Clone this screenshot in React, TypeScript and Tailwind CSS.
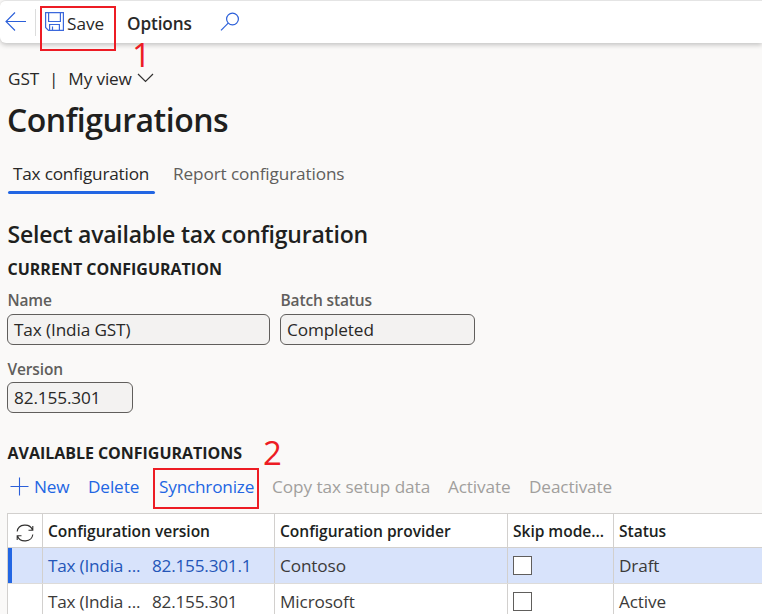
import type { ReactNode } from "react";

function TopBar() {
  return (
    <header className="flex h-[43px] items-center rounded-l-md border-t border-[#e4e4e4] bg-white shadow-[0_2px_5px_rgba(0,0,0,0.22)]">
      <svg className="ml-[5px] h-[22px] w-[22px] shrink-0" viewBox="0 0 22 22" fill="none" stroke="#2b5fd9" strokeWidth="1.1">
        <path d="M21 10.5H1M10 1.5L1 10.5L10 19.5" />
      </svg>
      <div className="ml-2 h-[27px] w-px bg-[#dcdcdc]" />
      <svg className="ml-[9px] h-[20px] w-[20px] shrink-0" viewBox="0 0 20 20" fill="none" stroke="#3b68dc" strokeWidth="1.2">
        <path d="M0.6 0.6H18.4V18.4H3.5L0.6 15.5Z M3.6 0.6V9.5H15.4V0.6 M4.6 18.4V12.5H14.4V18.4 M7.5 14.5V18.4" />
      </svg>
      <span className="mt-[3px] ml-[2px] w-[60px] tracking-[0px]">Save</span>
      <span className="mt-[3px] w-[64px] font-semibold">Options</span>
      <svg className="ml-[29px] h-[20px] w-[20px]" viewBox="0 0 20 20" fill="none" stroke="#2b5fd9" strokeWidth="1.2">
        <circle cx="12.5" cy="7" r="5.9" />
        <path d="M8.2 11.2L1 18.4" />
      </svg>
    </header>
  );
}

function Field({ label, value, width, gap }: { label: string; value: string; width: string; gap: string }) {
  return (
    <div className={width}>
      <div className="pl-[0.5px] text-[15.5px] leading-5 font-semibold tracking-[-0.15px] text-[#605e5c]">{label}</div>
      <div className={`${gap} flex h-[31px] items-center rounded-[6px] border border-[#605e5c] bg-[#f3f2f1] pl-[6px]`}>{value}</div>
    </div>
  );
}

function Cell({ children, last }: { children?: ReactNode; last?: boolean }) {
  return <div className={`flex items-center overflow-hidden pl-[5px] ${last ? "" : "border-r border-[#d2d0ce]"}`}>{children}</div>;
}

const grid = "grid grid-cols-[35px_232px_233px_106px_1fr]";

function Row({ version, provider, status, active }: { version: string; provider: string; status: string; active?: boolean }) {
  return (
    <div className={`${grid} h-9 border-b border-[#dddbd9] text-[#3b3a39] ${active ? "bg-[#d8e3fb]" : "bg-white"}`}>
      <div className={`border-r border-[#d2d0ce] ${active ? "border-l-4 border-l-[#2266e3]" : ""}`} />
      <Cell>
        <div className={`flex tracking-[-0.22px] ${active ? "text-[#2456b8]" : ""}`}>
          <span className="w-[104px]">Tax (India ...</span>
          <span>{version}</span>
        </div>
      </Cell>
      <Cell>{provider}</Cell>
      <Cell>
        <div className="h-[19px] w-[19px] border-[1.5px] border-[#605e5c] bg-white" />
      </Cell>
      <Cell last>{status}</Cell>
    </div>
  );
}

export default function App() {
  return (
    <div className="relative h-[614px] w-[762px] overflow-hidden bg-[#faf9f8] font-['Open_Sans','Noto_Sans',sans-serif] text-[17.2px] leading-6 tracking-[-0.12px] whitespace-nowrap text-[#292827]">
      <TopBar />
      <main className="pl-[7px]">
        <div className="mt-6 flex items-center pl-px">
          <span>GST</span>
          <span className="ml-[10px]">|</span>
          <span className="ml-[10px] w-[64px] tracking-[-0.15px]">My view</span>
          <svg className="mb-[3px] ml-[5px] h-[10px] w-[17px]" viewBox="0 0 17 10" fill="none" stroke="#323130" strokeWidth="1.2">
            <path d="M1 1L8.5 8.5L16 1" />
          </svg>
        </div>
        <h1 className="mt-[9px] text-[32px] leading-10 font-semibold tracking-[-0.5px] text-[#201f1e]">Configurations</h1>
        <nav className="mt-[22px] flex">
          <div className="flex h-[32px] w-[148px] flex-col justify-between pl-px">
            <span className="pl-[5px] tracking-[-0.2px]">Tax configuration</span>
            <div className="h-[3px] w-full rounded-full bg-[#2266e3]" />
          </div>
          <div className="ml-[18px] text-[#605e5c]">Report configurations</div>
        </nav>
        <h2 className="mt-6 pl-[0.5px] text-[23px] leading-8 font-semibold tracking-[-0.22px] text-[#201f1e]">Select available tax configuration</h2>
        <h3 className="mt-[9px] pl-[0.5px] text-[16px] leading-5 font-bold tracking-[0px] text-[#201f1e]">CURRENT CONFIGURATION</h3>
        <div className="mt-[11px] flex gap-[10px]">
          <Field label="Name" value="Tax (India GST)" width="w-[263px]" gap="mt-1" />
          <Field label="Batch status" value="Completed" width="w-[195px]" gap="mt-1" />
        </div>
        <div className="mt-[14px] flex">
          <Field label="Version" value="82.155.301" width="w-[126px]" gap="mt-[3px]" />
        </div>
        <h3 className="mt-[30px] pl-[0.5px] text-[16px] leading-5 font-bold tracking-[-0.03px] text-[#201f1e]">AVAILABLE CONFIGURATIONS</h3>
        <div className="mt-[12px] flex items-center text-[#2266e3]">
          <svg className="mb-[2px] ml-[3px] h-[19px] w-[19px]" viewBox="0 0 19 19" fill="none" stroke="#2b5fd9" strokeWidth="1.1">
            <path d="M9.5 0.5V18.5M0.5 9.5H18.5" />
          </svg>
          <span className="ml-[5px] w-[54px]">New</span>
          <span className="w-[71px]">Delete</span>
          <span className="w-[113px] tracking-[-0.2px]">Synchronize</span>
          <span className="w-[176px] tracking-[-0.05px] text-[#a19f9d]">Copy tax setup data</span>
          <span className="w-[81px] text-[#a19f9d]">Activate</span>
          <span className="text-[#a19f9d]">Deactivate</span>
        </div>
        <section className="mt-[14px] border-t border-l border-[#d2d0ce]">
          <div className={`${grid} h-[34px] border-b border-[#d2d0ce] bg-white text-[15.6px] font-semibold tracking-[-0.05px] text-[#201f1e]`}>
            <div className="flex items-center justify-center border-r border-[#d2d0ce]">
              <svg className="mt-1 h-[18px] w-[18px]" viewBox="0 0 18 18" fill="none" stroke="#323130" strokeWidth="1.1">
                <path d="M1.2 7.5C2.2-0.5 14-1 16.5 6M16.8 2V6.2H12.5M16.8 10.5C15.8 18.5 4 19 1.5 12M1.2 16V11.8H5.5" />
              </svg>
            </div>
            <Cell>Configuration version</Cell>
            <Cell>Configuration provider</Cell>
            <Cell>Skip mode...</Cell>
            <Cell last>Status</Cell>
          </div>
          <Row version="82.155.301.1" provider="Contoso" status="Draft" active />
          <Row version="82.155.301" provider="Microsoft" status="Active" />
        </section>
      </main>
      <div className="absolute top-[6px] left-[40px] h-[45px] w-[76px] border-2 border-[#ed1c24]" />
      <div className="absolute top-[38px] left-[132px] text-[33px] leading-[34px] text-[#ed1c24]">1</div>
      <div className="absolute top-[468px] left-[153px] h-[41px] w-[106px] border-2 border-[#ed1c24]" />
      <div className="absolute top-[436px] left-[263px] text-[33px] leading-[34px] text-[#ed1c24]">2</div>
    </div>
  );
}
